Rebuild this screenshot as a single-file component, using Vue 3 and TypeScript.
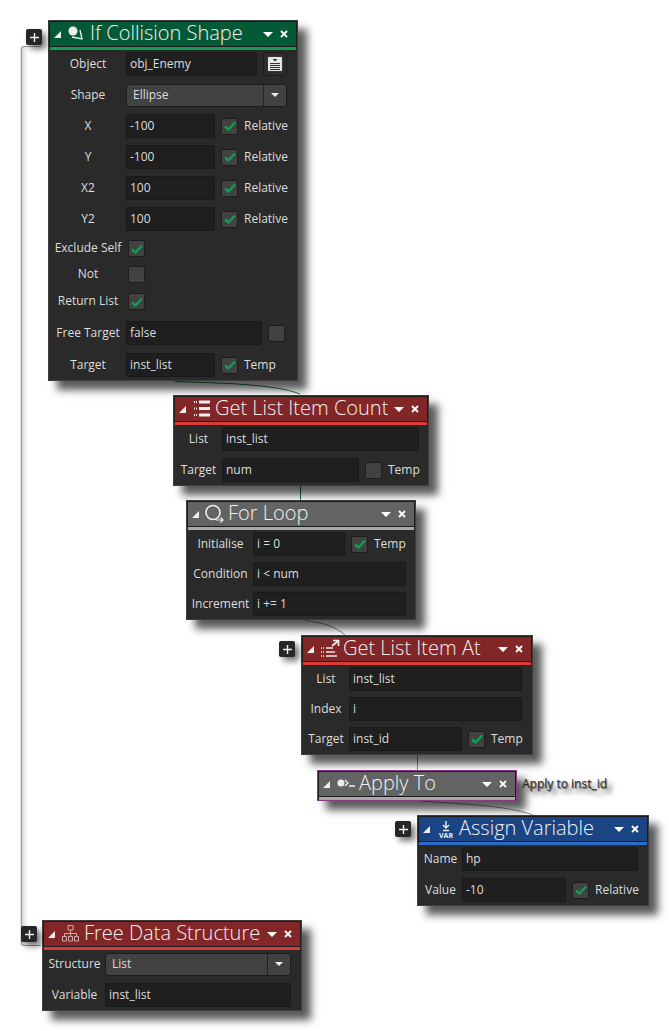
<script setup lang="ts">
interface Row {
  kind: 'input' | 'select' | 'check'
  label: string
  value?: string
  inputWidth?: number
  check?: boolean
  checkLabel?: string
  picker?: boolean
  extra?: number
}

interface GmlNode {
  id: string
  title: string
  icon: string
  theme: string
  x: number
  y: number
  width: number
  labelWidth: number
  gap: number
  rows: Row[]
}

const nodes: GmlNode[] = [
  {
    id: 'collision', title: 'If Collision Shape', icon: 'collision', theme: 'green',
    x: 48, y: 20, width: 250, labelWidth: 76, gap: 7,
    rows: [
      { kind: 'input', label: 'Object', value: 'obj_Enemy', inputWidth: 131, picker: true },
      { kind: 'select', label: 'Shape', value: 'Ellipse', inputWidth: 161 },
      { kind: 'input', label: 'X', value: '-100', inputWidth: 89, check: true, checkLabel: 'Relative' },
      { kind: 'input', label: 'Y', value: '-100', inputWidth: 89, check: true, checkLabel: 'Relative' },
      { kind: 'input', label: 'X2', value: '100', inputWidth: 89, check: true, checkLabel: 'Relative' },
      { kind: 'input', label: 'Y2', value: '100', inputWidth: 89, check: true, checkLabel: 'Relative' },
      { kind: 'check', label: 'Exclude Self', check: true, extra: 1 },
      { kind: 'check', label: 'Not', check: false },
      { kind: 'check', label: 'Return List', check: true, extra: 1 },
      { kind: 'input', label: 'Free Target', value: 'false', inputWidth: 136, check: false, checkLabel: '', extra: 3 },
      { kind: 'input', label: 'Target', value: 'inst_list', inputWidth: 89, check: true, checkLabel: 'Temp', extra: 1 },
    ],
  },
  {
    id: 'count', title: 'Get List Item Count', icon: 'list', theme: 'red',
    x: 173, y: 395, width: 256, labelWidth: 47, gap: 7,
    rows: [
      { kind: 'input', label: 'List', value: 'inst_list', inputWidth: 197 },
      { kind: 'input', label: 'Target', value: 'num', inputWidth: 137, check: false, checkLabel: 'Temp' },
    ],
  },
  {
    id: 'loop', title: 'For Loop', icon: 'loop', theme: 'grey',
    x: 186, y: 500, width: 230, labelWidth: 65, gap: 6,
    rows: [
      { kind: 'input', label: 'Initialise', value: 'i = 0', inputWidth: 92, check: true, checkLabel: 'Temp' },
      { kind: 'input', label: 'Condition', value: 'i < num', inputWidth: 153 },
      { kind: 'input', label: 'Increment', value: 'i += 1', inputWidth: 153 },
    ],
  },
  {
    id: 'item', title: 'Get List Item At', icon: 'listOut', theme: 'red',
    x: 301, y: 635, width: 232, labelWidth: 46, gap: 6,
    rows: [
      { kind: 'input', label: 'List', value: 'inst_list', inputWidth: 173 },
      { kind: 'input', label: 'Index', value: 'i', inputWidth: 173 },
      { kind: 'input', label: 'Target', value: 'inst_id', inputWidth: 113, check: true, checkLabel: 'Temp' },
    ],
  },
  {
    id: 'apply', title: 'Apply To', icon: 'apply', theme: 'grey apply',
    x: 317, y: 770, width: 200, labelWidth: 0, gap: 0,
    rows: [],
  },
  {
    id: 'assign', title: 'Assign Variable', icon: 'var', theme: 'blue',
    x: 417, y: 815, width: 232, labelWidth: 43, gap: 7,
    rows: [
      { kind: 'input', label: 'Name', value: 'hp', inputWidth: 176 },
      { kind: 'input', label: 'Value', value: '-10', inputWidth: 104, check: true, checkLabel: 'Relative' },
    ],
  },
  {
    id: 'free', title: 'Free Data Structure', icon: 'tree', theme: 'red',
    x: 42, y: 920, width: 260, labelWidth: 61, gap: 7,
    rows: [
      { kind: 'select', label: 'Structure', value: 'List', inputWidth: 186 },
      { kind: 'input', label: 'Variable', value: 'inst_list', inputWidth: 186 },
    ],
  },
]

const expanders = [
  { x: 26, y: 29 },
  { x: 279, y: 641 },
  { x: 395, y: 821 },
  { x: 21, y: 926 },
]

const nodePos = (n: GmlNode) => ({ left: n.x + 'px', top: n.y + 'px', width: n.width + 'px' })
</script>

<template>
  <div class="canvas">
    <!-- block bracket and wires sit under the nodes -->
    <div class="bracket" />
    <svg class="wires" width="669" height="1031" viewBox="0 0 669 1031" fill="none">
      <path d="M175 381.5C220 383 275 384 300 394M300.500 486V501" stroke="#1c7a3c" />
      <path d="M305 620.500C320 622 335 626 345 635M417.500 755V770M420 801C460 804 505 805 533 815" stroke="#8c8c8c" />
    </svg>

    <button v-for="(e, i) in expanders" :key="i" class="expander" :style="{ left: e.x + 'px', top: e.y + 'px' }">
      <svg width="9" height="9" viewBox="0 0 9 9"><path d="M4.500 0v9M0 4.500h9" stroke="#eee" stroke-width="1.400" /></svg>
    </button>

    <section v-for="n in nodes" :key="n.id" class="node" :class="n.theme" :style="nodePos(n)">
      <header class="head">
        <span class="arrow" />
        <svg class="ico" width="22" height="22" viewBox="0 0 22 22" fill="none" stroke="#eee">
          <template v-if="n.icon === 'collision'">
            <circle cx="6" cy="8" r="4.500" fill="#eee" stroke="none" />
            <path d="M5 14l10 2L13 7" stroke-width="1.300" />
          </template>
          <template v-else-if="n.icon === 'list'">
            <path d="M7 4h11M7 10.500h11M7 17h11" stroke-width="3" />
            <path d="M2 4h3M2 10.500h3M2 17h3" stroke-dasharray="1 1" stroke-width="2" />
          </template>
          <template v-else-if="n.icon === 'loop'">
            <circle cx="8" cy="9.500" r="7" stroke-width="1.600" />
            <path d="M11 17h7M15.500 14.500L18 17l-2.500 2.500" stroke-width="1.200" />
          </template>
          <template v-else-if="n.icon === 'listOut'">
            <path d="M6 10h7M6 14h9M6 18h11" stroke="#d2b9b9" stroke-width="2" />
            <path d="M1 10h3M1 14h3M1 18h3" stroke="#d2b9b9" stroke-width="2" stroke-dasharray="1 1" />
            <path d="M12 8l6-5M13 2.500h5.500V8" stroke-width="1.700" />
          </template>
          <template v-else-if="n.icon === 'apply'">
            <circle cx="5" cy="10" r="3.500" fill="#eee" stroke="none" />
            <path d="M9 7l3 3-3 3M13 13h6" stroke-width="1.300" />
          </template>
          <template v-else-if="n.icon === 'var'">
            <path d="M10 3v7M7 7l3 3 3-3M7 12.500h6" stroke-width="1.400" />
          </template>
          <template v-else>
            <path d="M9.500 7v3.500M3.500 13v-2.500h12V13M9.500 10.500V13" stroke="#d2a9a9" />
            <path d="M7 2.500h5v4.500H7zM1.500 13.500h4V18h-4zM7.500 13.500h4V18h-4zM13.500 13.500h4V18h-4z" stroke="#d2a9a9" />
          </template>
        </svg>
        <span v-if="n.icon === 'var'" class="var-tag">VAR</span>
        <h3 class="title">{{ n.title }}</h3>
        <span class="menu" />
        <svg class="close" width="8" height="8" viewBox="0 0 8 8"><path d="M1 1l6 6M7 1l-6 6" stroke="#fff" stroke-width="1.800" /></svg>
      </header>
      <div class="rule" />

      <div v-if="n.rows.length" class="body" :style="{ gap: n.gap + 'px' }">
        <div
          v-for="r in n.rows"
          :key="r.label"
          class="row"
          :class="{ short: r.kind === 'check' }"
          :style="r.extra ? { marginTop: r.extra + 'px' } : undefined"
        >
          <label class="label" :style="{ width: n.labelWidth + 'px' }">{{ r.label }}</label>

          <span v-if="r.kind === 'input'" class="input" :style="{ width: r.inputWidth + 'px' }">{{ r.value }}</span>

          <span v-else-if="r.kind === 'select'" class="select" :style="{ width: r.inputWidth + 'px' }">
            <span class="select-text">{{ r.value }}</span>
            <span class="select-btn"><i class="menu small" /></span>
          </span>

          <span v-if="r.picker" class="picker">
            <svg width="16" height="16" viewBox="0 0 16 16" fill="none">
              <rect x="0.500" y="0.500" width="15" height="15" rx="1.500" fill="#e6e6e6" stroke="#333" />
              <path d="M3 7.500h10M3 9.500h10M3 11.500h10M3 13.500h10" stroke="#333" />
              <path d="M5.500 3h5L8 5.500z" fill="#333" />
            </svg>
          </span>

          <template v-if="r.check !== undefined">
            <span class="box" :class="{ tight: r.kind === 'check' }">
              <svg v-if="r.check" width="12" height="10" viewBox="0 0 12 10" fill="none">
                <path d="M1 5.500l3.500 3L11 1.500" stroke="#0f9d58" stroke-width="2.400" />
              </svg>
            </span>
            <span v-if="r.checkLabel" class="check-label">{{ r.checkLabel }}</span>
          </template>
        </div>
      </div>
    </section>

    <div class="comment">Apply to inst_id</div>
  </div>
</template>

<style>
html, body {
  margin: 0;
  background: #fff;
}
</style>

<style scoped>
.canvas {
  position: relative;
  width: 669px;
  height: 1031px;
  overflow: hidden;
  background: #fff;
  font-family: "Open Sans", "Noto Sans", sans-serif;
}

.bracket {
  position: absolute;
  left: 21px;
  top: 46px;
  width: 20px;
  height: 900px;
  box-sizing: border-box;
  border: 1px solid #9a9a9a;
  border-right: 0;
  border-radius: 3px 0 0 3px;
  box-shadow: inset 5px 0 5px -3px #ccc, -1px 0 0 #e4e4e4;
}

.wires {
  position: absolute;
  left: 0;
  top: 0;
}

.expander {
  position: absolute;
  z-index: 2;
  width: 16px;
  height: 16px;
  padding: 0;
  border: 0;
  border-radius: 2px;
  background: #262626;
  display: flex;
  align-items: center;
  justify-content: center;
  box-shadow: 4px 4px 6px rgba(0, 0, 0, 0.55);
}

.node {
  position: absolute;
  z-index: 1;
  box-sizing: border-box;
  background: #2a2a2a;
  border: 2px solid #2a2a2a;
  outline: 1px solid #3e3e3e;
  outline-offset: -1px;
  box-shadow: 9px 9px 8px rgba(0, 0, 0, 0.65);
}

.head {
  height: 24px;
  display: flex;
  align-items: center;
  padding-left: 4px;
  color: #f2f2f2;
  position: relative;
  box-shadow: 0 0 0 1px #1c1c1c;
}

.green .head { background: #045a37; }
.red .head { background: #832627; }
.grey .head { background: #636363; }
.blue .head { background: #1a4484; }

.rule {
  height: 3px;
  margin-top: 1px;
}

.green .rule { background: #0f9d58; }
.red .rule { background: #d93a3a; }
.grey .rule { background: #a8a8a8; }
.blue .rule { background: #2b6cc4; }

.node.apply {
  background: #1d1d1d;
  border-color: #1d1d1d;
  outline: 1px solid #8a3a86;
  height: 31px;
}

.arrow {
  width: 0;
  height: 0;
  border-left: 7px solid transparent;
  border-bottom: 7px solid #eee;
  flex: none;
}

.ico {
  flex: none;
  margin-left: 6px;
}

.var-tag {
  position: absolute;
  left: 15px;
  top: 14px;
  width: 24px;
  text-align: center;
  font-size: 7px;
  font-weight: 700;
  line-height: 9px;
}

.title {
  margin: 0 0 3px 1px;
  font-size: 20px;
  font-weight: 300;
  line-height: 21px;
  white-space: nowrap;
  flex: 1;
  min-width: 0;
}

.menu {
  width: 0;
  height: 0;
  border-left: 5px solid transparent;
  border-right: 5px solid transparent;
  border-top: 5px solid #fff;
  flex: none;
}

.menu.small {
  display: block;
  border-left-width: 4px;
  border-right-width: 4px;
  border-top-width: 4px;
  border-top-color: #eee;
}

.close {
  flex: none;
  margin: 0 8px 0 7px;
}

.body {
  padding: 2px 0;
  display: flex;
  flex-direction: column;
}

.row {
  height: 24px;
  display: flex;
  align-items: center;
  color: #ddd;
  font-size: 12px;
}

.row.short {
  height: 19px;
}

.label {
  flex: none;
  text-align: center;
  white-space: nowrap;
  position: relative;
  top: -1px;
}

.input {
  flex: none;
  box-sizing: border-box;
  height: 24px;
  line-height: 21px;
  padding: 0 3px;
  background: #1f1f1f;
  border: 1px solid #191919;
  border-radius: 2px;
  white-space: nowrap;
}

.select {
  flex: none;
  box-sizing: border-box;
  height: 23px;
  display: flex;
  background: #424242;
  border: 1px solid #1d1d1d;
  border-radius: 3px;
}

.select-text {
  flex: 1;
  padding-left: 6px;
  line-height: 20px;
}

.select-btn {
  width: 22px;
  border-left: 1px solid #222;
  display: flex;
  align-items: center;
  justify-content: center;
}

.picker {
  flex: none;
  box-sizing: border-box;
  width: 24px;
  height: 24px;
  margin-left: 6px;
  background: #2c2c2c;
  border: 1px solid #1c1c1c;
  border-radius: 3px;
  display: flex;
  align-items: center;
  justify-content: center;
}

.box {
  flex: none;
  box-sizing: border-box;
  width: 17px;
  height: 17px;
  margin-left: 6px;
  background: #424242;
  border: 1px solid #1d1d1d;
  border-radius: 2px;
  display: flex;
  align-items: center;
  justify-content: center;
}

.box.tight {
  margin-left: 2px;
}

.check-label {
  margin-left: 6px;
  white-space: nowrap;
  position: relative;
  top: -1px;
}

.comment {
  position: absolute;
  left: 522px;
  top: 776px;
  z-index: 1;
  font-size: 12px;
  line-height: 16px;
  color: #2a2a2a;
  text-shadow: 1px 1px 1px #666, 5px 5px 5px rgba(0, 0, 0, 0.75);
  white-space: nowrap;
}
</style>
